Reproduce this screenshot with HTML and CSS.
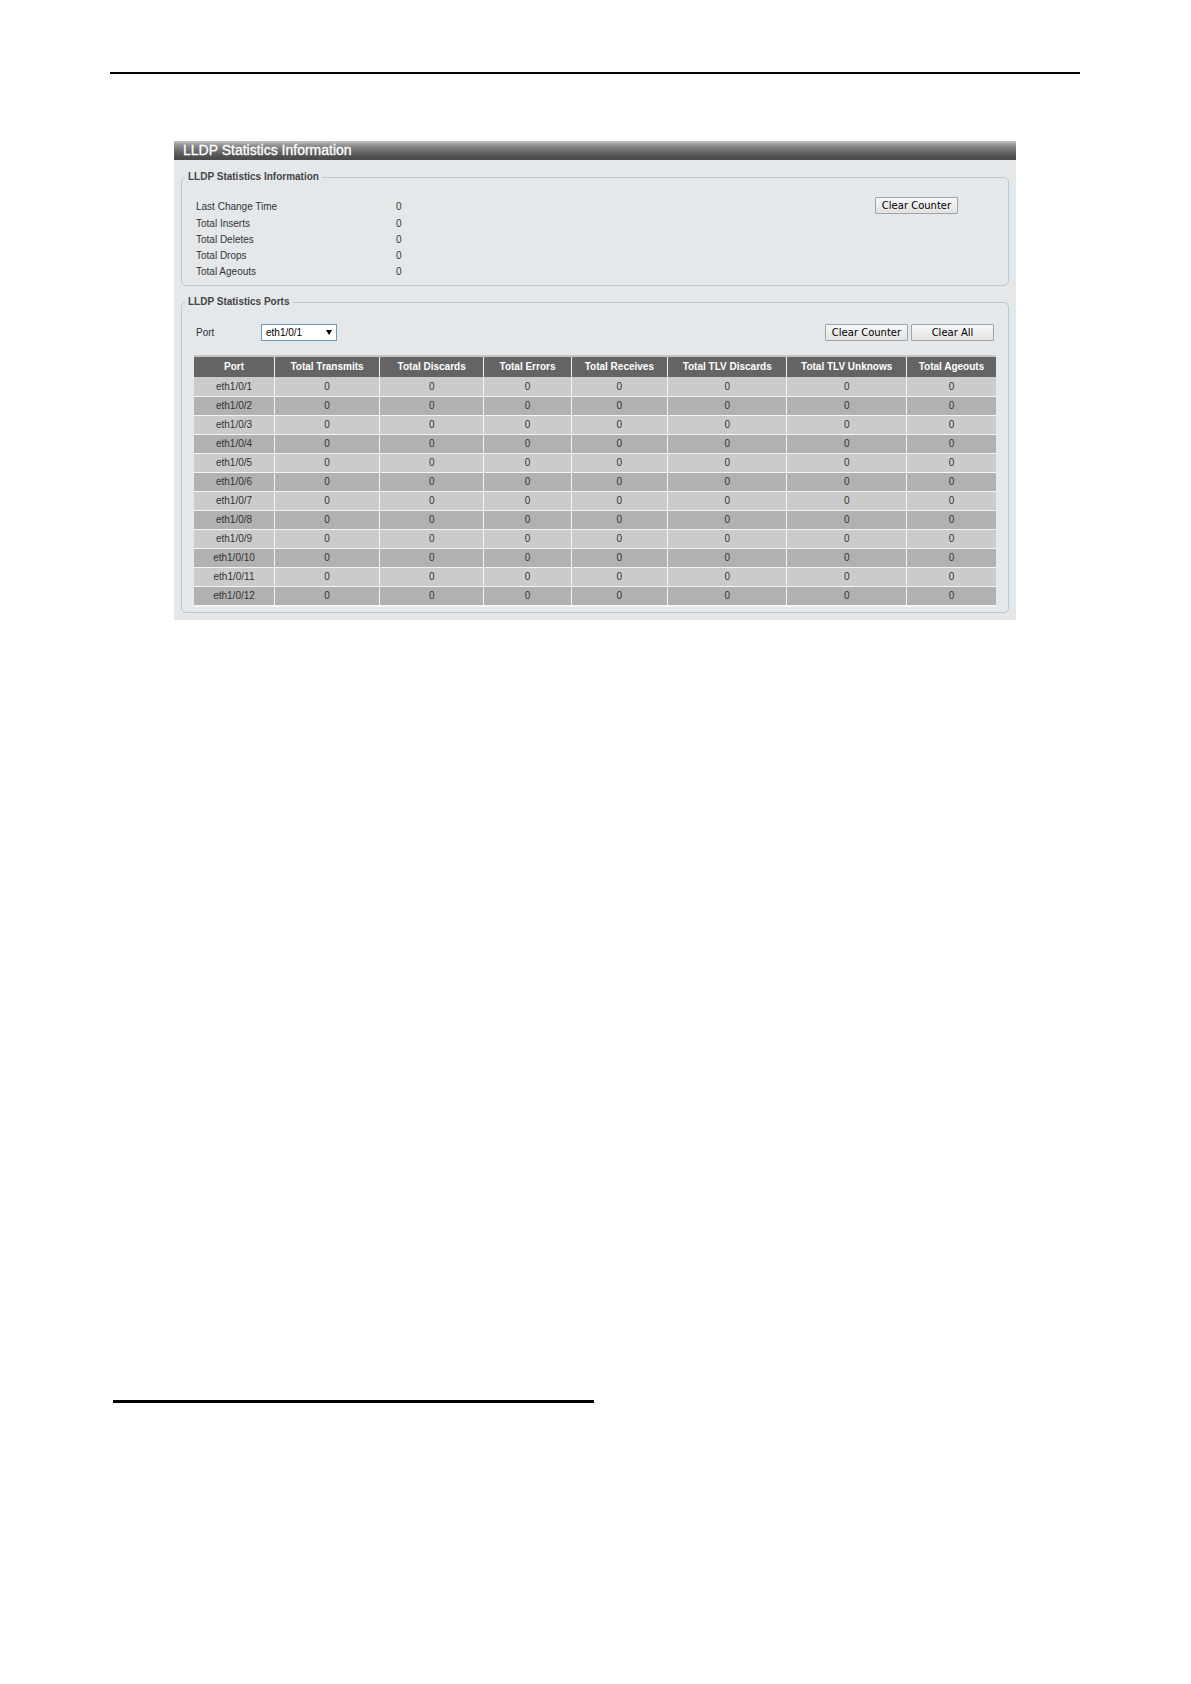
FILE: index.html
```html
<!DOCTYPE html>
<html lang="en">
<head>
    <meta charset="UTF-8">
    <meta name="viewport" content="width=device-width, initial-scale=1.0">
    <title>LLDP Statistics Information</title>
    <link rel="stylesheet" href="styles.css">
</head>
<body>

    <hr class="page-rule">

    <main class="panel">
        <h1 class="panel-title">LLDP Statistics Information</h1>

        <fieldset class="group">
            <legend>LLDP Statistics Information</legend>
            <div class="summary">
                <dl class="summary-list">
                    <dt>Last Change Time</dt><dd>0</dd>
                    <dt>Total Inserts</dt><dd>0</dd>
                    <dt>Total Deletes</dt><dd>0</dd>
                    <dt>Total Drops</dt><dd>0</dd>
                    <dt>Total Ageouts</dt><dd>0</dd>
                </dl>
                <button type="button" class="btn">Clear Counter</button>
            </div>
        </fieldset>

        <fieldset class="group ports">
            <legend>LLDP Statistics Ports</legend>
            <div class="toolbar">
                <label for="port">Port</label>
                <div class="select-wrap">
                    <select id="port">
                        <option>eth1/0/1</option>
                        <option>eth1/0/2</option>
                        <option>eth1/0/3</option>
                        <option>eth1/0/4</option>
                        <option>eth1/0/5</option>
                        <option>eth1/0/6</option>
                        <option>eth1/0/7</option>
                        <option>eth1/0/8</option>
                        <option>eth1/0/9</option>
                        <option>eth1/0/10</option>
                        <option>eth1/0/11</option>
                        <option>eth1/0/12</option>
                    </select>
                    <svg class="arrow" width="6" height="5" viewBox="0 0 6 5"><path d="M0 0h6L3 5z" fill="#000"/></svg>
                </div>
                <div class="actions">
                    <button type="button" class="btn">Clear Counter</button>
                    <button type="button" class="btn">Clear All</button>
                </div>
            </div>

            <table class="stats">
                <colgroup>
                    <col class="col-port">
                    <col class="col-transmits">
                    <col class="col-discards">
                    <col class="col-errors">
                    <col class="col-receives">
                    <col class="col-tlv">
                    <col class="col-tlv">
                    <col class="col-ageouts">
                </colgroup>
                <thead>
                    <tr>
                        <th>Port</th>
                        <th>Total Transmits</th>
                        <th>Total Discards</th>
                        <th>Total Errors</th>
                        <th>Total Receives</th>
                        <th>Total TLV Discards</th>
                        <th>Total TLV Unknows</th>
                        <th>Total Ageouts</th>
                    </tr>
                </thead>
                <tbody>
                    <tr><td>eth1/0/1</td><td>0</td><td>0</td><td>0</td><td>0</td><td>0</td><td>0</td><td>0</td></tr>
                    <tr><td>eth1/0/2</td><td>0</td><td>0</td><td>0</td><td>0</td><td>0</td><td>0</td><td>0</td></tr>
                    <tr><td>eth1/0/3</td><td>0</td><td>0</td><td>0</td><td>0</td><td>0</td><td>0</td><td>0</td></tr>
                    <tr><td>eth1/0/4</td><td>0</td><td>0</td><td>0</td><td>0</td><td>0</td><td>0</td><td>0</td></tr>
                    <tr><td>eth1/0/5</td><td>0</td><td>0</td><td>0</td><td>0</td><td>0</td><td>0</td><td>0</td></tr>
                    <tr><td>eth1/0/6</td><td>0</td><td>0</td><td>0</td><td>0</td><td>0</td><td>0</td><td>0</td></tr>
                    <tr><td>eth1/0/7</td><td>0</td><td>0</td><td>0</td><td>0</td><td>0</td><td>0</td><td>0</td></tr>
                    <tr><td>eth1/0/8</td><td>0</td><td>0</td><td>0</td><td>0</td><td>0</td><td>0</td><td>0</td></tr>
                    <tr><td>eth1/0/9</td><td>0</td><td>0</td><td>0</td><td>0</td><td>0</td><td>0</td><td>0</td></tr>
                    <tr><td>eth1/0/10</td><td>0</td><td>0</td><td>0</td><td>0</td><td>0</td><td>0</td><td>0</td></tr>
                    <tr><td>eth1/0/11</td><td>0</td><td>0</td><td>0</td><td>0</td><td>0</td><td>0</td><td>0</td></tr>
                    <tr><td>eth1/0/12</td><td>0</td><td>0</td><td>0</td><td>0</td><td>0</td><td>0</td><td>0</td></tr>
                </tbody>
            </table>
        </fieldset>
    </main>

    <hr class="foot-rule">

</body>
</html>
```
FILE: styles.css
```css
* {
    margin: 0;
    padding: 0;
    box-sizing: border-box;
}

body {
    display: flex;
    flex-direction: column;
    min-height: 100vh;
    padding: 72px 111px 281px 110px;
    background-color: #fff;
    color: #333;
    font-family: "Liberation Sans", Arial, sans-serif;
    font-size: 10px;
    line-height: 12px;
}

.page-rule {
    border: none;
    height: 2px;
    background-color: #000;
}

.foot-rule {
    border: none;
    width: calc(50% - 4px);
    height: 3px;
    margin: auto 0 0 3px;
    background-color: #000;
}

/* panel */
.panel {
    margin: 67px 64px 40px;
    padding-bottom: 7px;
    background-color: #e4e8eb;
}

.panel-title {
    height: 19px;
    padding-left: 9px;
    background: linear-gradient(#c4c4c4, #8c8c8c 25%, #505050 80%, #4a4a4a);
    color: #fff;
    font-size: 14px;
    font-weight: normal;
    line-height: 19px;
    -webkit-text-stroke: 0.3px #fff;
}

.group {
    min-width: 0;
    margin: 11px 7px 0;
    padding: 14px 12px 5px;
    border: 1px solid #b9c9cf;
    border-radius: 5px;
}

.group legend {
    margin-left: -9px;
    padding: 0 3px;
    color: #444;
    font-weight: bold;
}

.ports {
    margin-top: 10px;
    padding-top: 16px;
}

.summary {
    display: flex;
    justify-content: space-between;
    align-items: flex-start;
    padding: 0 38px 0 2px;
}

.summary-list {
    display: grid;
    grid-template-columns: 200px auto;
    grid-template-rows: 19px;
    grid-auto-rows: 16px;
    align-items: center;
}

.btn {
    width: 83px;
    height: 17px;
    border: 1px solid #a0a4a6;
    border-radius: 1px;
    background: linear-gradient(#f8f8f8, #e2e2e2);
    color: #000;
    font-family: "DejaVu Sans", Verdana, sans-serif;
    font-size: 10px;
    line-height: 15px;
    white-space: nowrap;
}

.toolbar {
    display: flex;
    align-items: center;
    padding: 0 2px;
}

.toolbar label {
    width: 65px;
}

.select-wrap {
    position: relative;
}

.select-wrap select {
    display: block;
    appearance: none;
    width: 76px;
    height: 17px;
    padding-left: 4px;
    border: 1px solid #6f9bb8;
    background-color: #fff;
    color: #000;
    font-family: inherit;
    font-size: 10px;
}

.arrow {
    position: absolute;
    top: 6px;
    right: 5px;
    pointer-events: none;
}

.actions {
    display: flex;
    gap: 3px;
    margin-left: auto;
}

/* statistics table */
.stats {
    width: 100%;
    margin-top: 14px;
    border-top: 2px solid #c4c6c8;
    border-bottom: 1px solid #f4f4f4;
    border-collapse: separate;
    border-spacing: 0;
    table-layout: fixed;
}

.stats th,
.stats td {
    height: 19px;
    border-right: 1px solid #f4f4f4;
    border-bottom: 1px solid #f4f4f4;
    text-align: center;
    white-space: nowrap;
}

.stats th {
    height: 21px;
    border-bottom-color: #c9c9c9;
    background-color: #646464;
    color: #fff;
}

.stats th:last-child,
.stats td:last-child {
    border-right: none;
}

.stats tbody tr:nth-child(odd) {
    background-color: #cbcbcb;
}

.stats tbody tr:nth-child(even) {
    background-color: #b1b1b1;
}

.col-port {
    width: 10.1%;
}

.col-transmits {
    width: 13.1%;
}

.col-discards {
    width: 13%;
}

.col-errors {
    width: 10.9%;
}

.col-receives {
    width: 12%;
}

.col-tlv {
    width: 14.9%;
}

.col-ageouts {
    width: 11.1%;
}
```
